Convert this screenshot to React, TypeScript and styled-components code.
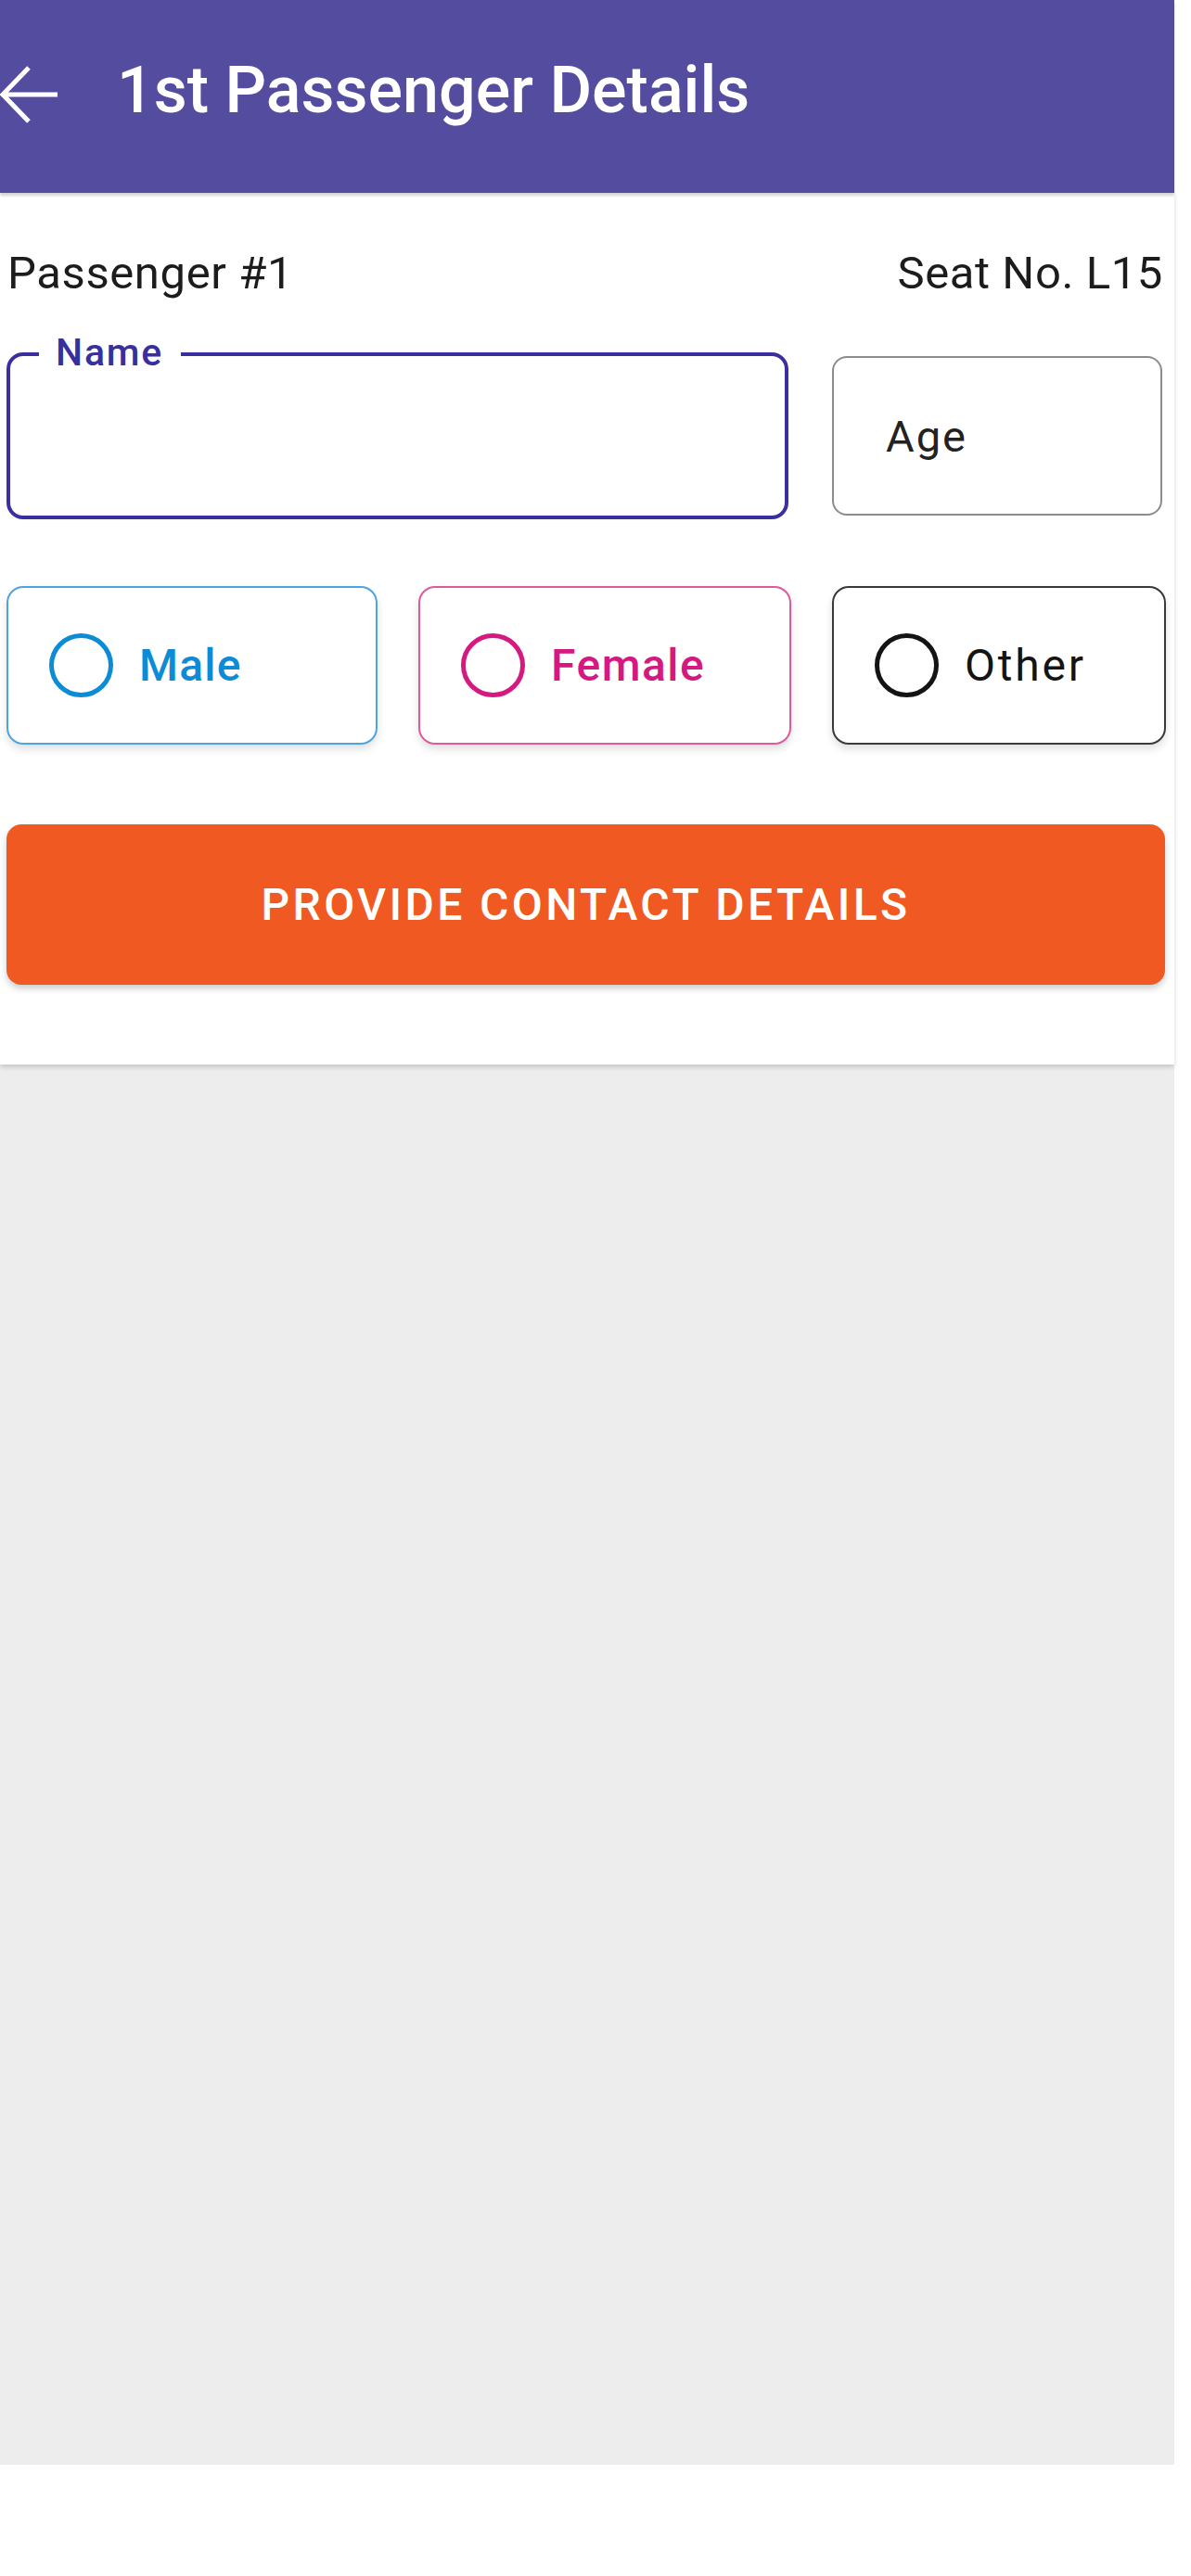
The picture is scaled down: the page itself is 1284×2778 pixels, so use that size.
import React from "react";
import styled, { createGlobalStyle } from "styled-components";

const GlobalStyle = createGlobalStyle`
  html, body {
    margin: 0;
    padding: 0;
    background: #ffffff;
  }
  body {
    font-family: Roboto, "Noto Sans", "Liberation Sans", Arial, sans-serif;
    -webkit-font-smoothing: antialiased;
  }
  * { box-sizing: border-box; }
`;

const Screen = styled.div`
  width: 1266px;
  display: flex;
  flex-direction: column;
`;

const Header = styled.header`
  position: relative;
  z-index: 2;
  height: 208px;
  background: #544c9f;
  display: flex;
  align-items: flex-start;
  padding-top: 56px;
  box-shadow: 0 3px 3px rgba(0, 0, 0, 0.18);
`;

const BackIcon = styled.svg`
  flex: 0 0 64px;
  width: 64px;
  height: 64px;
  margin-top: 14px;
`;

const Title = styled.h1`
  margin: 0 0 0 62px;
  font-family: Roboto, "Noto Sans", sans-serif;
  font-weight: 500;
  font-size: 70px;
  line-height: 82px;
  color: #ffffff;
`;

const Card = styled.section`
  position: relative;
  z-index: 1;
  background: #ffffff;
  padding: 59px 10px 86px 7px;
  box-shadow: 0 3px 5px rgba(0, 0, 0, 0.16);
  display: flex;
  flex-direction: column;
`;

const PassengerRow = styled.div`
  display: flex;
  justify-content: space-between;
  align-items: center;
  height: 56px;
  padding: 0 2px 0 1px;
  font-family: Roboto, "Noto Sans", sans-serif;
  font-size: 49px;
  line-height: 56px;
  letter-spacing: 0.6px;
  color: #1c1c1c;
`;

const FieldsRow = styled.div`
  display: flex;
  align-items: center;
  gap: 47px;
  margin-top: 57px;
`;

const NameField = styled.div`
  position: relative;
  flex: 0 0 843px;
  height: 180px;
  border: 4px solid #3a2f9e;
  border-radius: 18px;
`;

const FloatLabel = styled.span`
  position: absolute;
  top: -4px;
  left: 31px;
  transform: translateY(-50%);
  padding: 0 19px 0 18px;
  background: #ffffff;
  font-family: Roboto, "Noto Sans", sans-serif;
  font-weight: 500;
  font-size: 41px;
  line-height: 40px;
  letter-spacing: 1.8px;
  color: #3a2f9e;
`;

const AgeField = styled.div`
  flex: 0 0 356px;
  height: 172px;
  border: 2px solid #8c8c8c;
  border-radius: 16px;
  display: flex;
  align-items: center;
  padding-left: 56px;
  font-family: Roboto, "Noto Sans", sans-serif;
  font-size: 47px;
  letter-spacing: 2px;
  color: #222222;
`;

const GenderRow = styled.div`
  display: flex;
  gap: 44px;
  margin-top: 72px;
`;

const GenderOption = styled.div<{
  $w: number;
  $color: string;
  $border: string;
  $weight: number;
  $spacing: number;
}>`
  flex: 0 0 ${(p) => p.$w}px;
  height: 171px;
  border: 2px solid ${(p) => p.$border};
  border-radius: 18px;
  background: #ffffff;
  box-shadow: 0 5px 9px rgba(0, 0, 0, 0.12);
  display: flex;
  align-items: center;
  gap: 28px;
  padding-left: 44px;
  color: ${(p) => p.$color};
  font-family: Roboto, "Noto Sans", sans-serif;
  font-weight: ${(p) => p.$weight};
  font-size: 48px;
  letter-spacing: ${(p) => p.$spacing}px;
`;

const RadioCircle = styled.span`
  flex: 0 0 69px;
  width: 69px;
  height: 69px;
  border: 5px solid currentColor;
  border-radius: 50%;
`;

const ActionButton = styled.button`
  margin-top: 86px;
  height: 173px;
  width: 100%;
  border: none;
  border-radius: 16px;
  background: #f05a22;
  box-shadow: 0 4px 7px rgba(0, 0, 0, 0.2);
  color: #ffffff;
  font-family: Roboto, "Noto Sans", sans-serif;
  font-weight: 500;
  font-size: 48px;
  letter-spacing: 3.4px;
  text-transform: uppercase;
  padding: 0;
`;

const Backdrop = styled.div`
  height: 1510px;
  background: #ededed;
`;

const genders = [
  { label: "Male", w: 400, color: "#0e8bd5", border: "#4ea4df", weight: 500, spacing: 1.2 },
  { label: "Female", w: 402, color: "#d41a80", border: "#de5a9c", weight: 500, spacing: 1.5 },
  { label: "Other", w: 360, color: "#141414", border: "#3a3a3a", weight: 400, spacing: 2.8 },
];

export default function App() {
  return (
    <>
      <GlobalStyle />
      <Screen>
        <Header>
          <BackIcon viewBox="0 0 64 64" fill="none">
            <path
              d="M62 32 H4 M31 3 L3 32 L31 61"
              stroke="#ffffff"
              strokeWidth="5"
              strokeLinejoin="miter"
            />
          </BackIcon>
          <Title>1st Passenger Details</Title>
        </Header>
        <Card>
          <PassengerRow>
            <span>Passenger #1</span>
            <span>Seat No. L15</span>
          </PassengerRow>
          <FieldsRow>
            <NameField>
              <FloatLabel>Name</FloatLabel>
            </NameField>
            <AgeField>Age</AgeField>
          </FieldsRow>
          <GenderRow>
            {genders.map((g) => (
              <GenderOption
                key={g.label}
                $w={g.w}
                $color={g.color}
                $border={g.border}
                $weight={g.weight}
                $spacing={g.spacing}
              >
                <RadioCircle />
                <span>{g.label}</span>
              </GenderOption>
            ))}
          </GenderRow>
          <ActionButton>Provide Contact Details</ActionButton>
        </Card>
        <Backdrop />
      </Screen>
    </>
  );
}
